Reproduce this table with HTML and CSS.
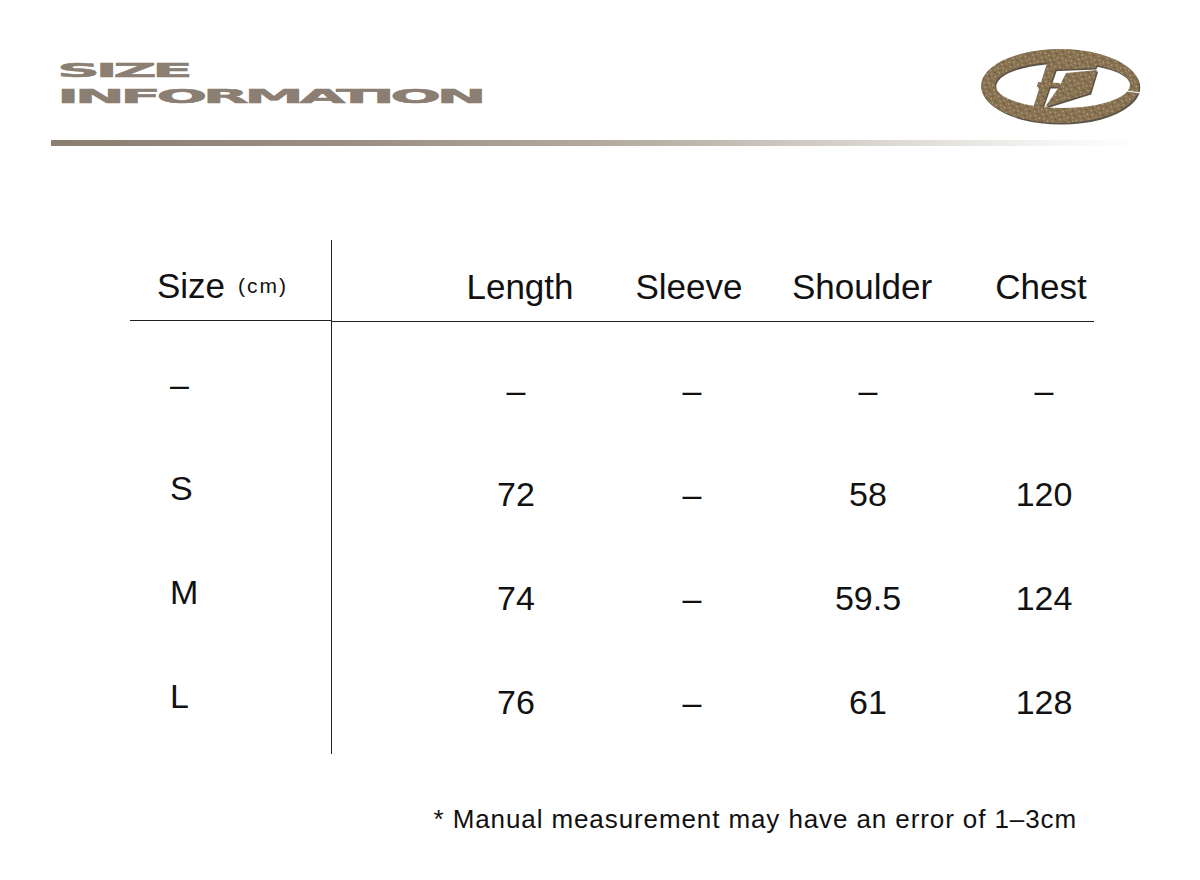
FILE: index.html
```html
<!DOCTYPE html>
<html lang="en">
<head>
<meta charset="utf-8">
<title>Size Information</title>
<link rel="stylesheet" href="styles.css">
</head>
<body>
<div class="page">
  <header class="top">
    <div class="title">
      <span class="title-line">SIZE</span>
      <span class="title-line">INFORMATION</span>
    </div>
    <svg class="logo" width="164" height="80" viewBox="0 0 164 80" aria-label="logo">
      <defs>
        <pattern id="stone" width="9" height="9" patternUnits="userSpaceOnUse" patternTransform="rotate(17)">
          <rect width="9" height="9" fill="#86704f"/>
          <circle cx="1.2" cy="1.5" r="0.8" fill="#c2b499"/>
          <circle cx="5.6" cy="2.4" r="0.6" fill="#5a4832"/>
          <circle cx="3.4" cy="5.1" r="0.9" fill="#b3a283"/>
          <circle cx="7.6" cy="6.3" r="0.7" fill="#c9bda4"/>
          <circle cx="1.9" cy="7.8" r="0.6" fill="#55442f"/>
          <circle cx="6.9" cy="0.4" r="0.5" fill="#a89676"/>
          <circle cx="4.8" cy="8.2" r="0.5" fill="#d0c5ad"/>
          <circle cx="8.4" cy="3.9" r="0.5" fill="#6a573d"/>
          <circle cx="0.3" cy="4.4" r="0.5" fill="#9d8a69"/>
        </pattern>
      </defs>
      <g fill="#33281b" transform="translate(1.2 1.6)" opacity="0.8">
        <path fill-rule="evenodd" d="M82 3 A79 37 0 1 0 82.01 3 Z M84.5 16 A67.5 23 0 1 1 84.49 16 Z"/>
        <polygon points="74,12 120,17 117,22 69,24"/>
        <polygon points="69,17 79,19 61,71 52,72"/>
        <polygon points="60,36 82,37 80,41 59,41"/>
        <polygon points="88,27 119,24 112,47 67,61 81,41"/>
      </g>
      <g fill="url(#stone)">
        <path fill-rule="evenodd" d="M82 3 A79 37 0 1 0 82.01 3 Z M84.5 16 A67.5 23 0 1 1 84.49 16 Z"/>
        <polygon points="74,12 120,17 117,22 69,24"/>
        <polygon points="69,17 79,19 61,71 52,72"/>
        <polygon points="60,36 82,37 80,41 59,41"/>
        <polygon points="88,27 119,24 112,47 67,61 81,41"/>
      </g>
      <line x1="149" y1="45" x2="163" y2="47" stroke="#ffffff" stroke-width="1.2"/>
    </svg>
  </header>
  <div class="rule"></div>

  <div class="table">
    <div class="col-size">
      <div class="head-cell head-size">Size<span class="unit">(cm)</span></div>
      <div class="body">
        <div class="label">–</div>
        <div class="label">S</div>
        <div class="label">M</div>
        <div class="label">L</div>
      </div>
    </div>
    <div class="col-data">
      <div class="head-row">
        <div class="spacer"></div>
        <div class="head-cell hc-length">Length</div>
        <div class="head-cell hc-sleeve">Sleeve</div>
        <div class="head-cell hc-shoulder">Shoulder</div>
        <div class="head-cell hc-chest">Chest</div>
      </div>
      <div class="body">
        <div class="row"><div class="spacer"></div><div class="cell">–</div><div class="cell">–</div><div class="cell">–</div><div class="cell">–</div></div>
        <div class="row"><div class="spacer"></div><div class="cell">72</div><div class="cell">–</div><div class="cell">58</div><div class="cell">120</div></div>
        <div class="row"><div class="spacer"></div><div class="cell">74</div><div class="cell">–</div><div class="cell">59.5</div><div class="cell">124</div></div>
        <div class="row"><div class="spacer"></div><div class="cell">76</div><div class="cell">–</div><div class="cell">61</div><div class="cell">128</div></div>
      </div>
    </div>
  </div>

  <p class="note">* Manual measurement may have an error of 1–3cm</p>
</div>
</body>
</html>
```

FILE: styles.css
```css
html, body {
  margin: 0;
  padding: 0;
  background: #ffffff;
}

.page {
  width: 1200px;
  height: 880px;
  overflow: hidden;
  font-family: "Liberation Sans", Arial, sans-serif;
  color: #111111;
}

.top {
  display: flex;
  justify-content: space-between;
  align-items: flex-start;
  padding: 46px 58px 0 57px;
  height: 80px;
}

.title {
  margin-top: 12px;
  display: flex;
  flex-direction: column;
  align-items: flex-start;
  font-family: "DejaVu Sans", sans-serif;
  font-weight: bold;
  font-size: 19.5px;
  line-height: 26px;
  letter-spacing: -1.5px;
  color: #8b7f73;
  -webkit-text-stroke: 0.5px #8b7f73;
}

.title-line {
  display: inline-block;
  transform: scaleX(3.07);
  transform-origin: left center;
  white-space: nowrap;
}

.logo {
  display: block;
}

.rule {
  margin: 14px 0 0 51px;
  width: 1092px;
  height: 6px;
  background: linear-gradient(to right, #8a7e71 0%, #9c9184 30%, #b9b0a6 55%, #dedad5 78%, #f6f5f3 92%, #ffffff 100%);
}

.table {
  display: flex;
  margin: 94px 0 0 130px;
  width: 964px;
}

.col-size {
  flex: none;
  width: 201px;
  border-right: 1px solid #222222;
}

.col-data {
  flex: 1;
  min-width: 0;
}

.head-cell {
  height: 81px;
  box-sizing: border-box;
  border-bottom: 1px solid #222222;
  display: flex;
  align-items: flex-end;
  padding-bottom: 14px;
  font-size: 35px;
  line-height: 40px;
  white-space: nowrap;
}

.head-size {
  padding-left: 27px;
}

.unit {
  font-size: 21px;
  letter-spacing: 2px;
  margin-left: 13px;
}

.head-row {
  display: grid;
  grid-template-columns: 96px 176px 176px 176px 176px;
  height: 81px;
  border-bottom: 1px solid #222222;
}

.head-row .head-cell {
  border-bottom: none;
  justify-content: center;
}

.hc-length { padding-left: 8px; }
.hc-sleeve { padding-right: 6px; }
.hc-shoulder { padding-right: 12px; }
.hc-chest { padding-right: 6px; }

.body {
  padding-top: 16px;
}

.label {
  height: 104px;
  box-sizing: border-box;
  padding: 0 0 10px 40px;
  font-size: 34px;
  line-height: 94px;
}

.row {
  display: grid;
  grid-template-columns: 96px 176px 176px 176px 176px;
  height: 104px;
}

.cell {
  text-align: center;
  font-size: 34px;
  line-height: 104px;
  white-space: nowrap;
}

.note {
  margin: 50px 123px 0 0;
  text-align: right;
  font-size: 26px;
  line-height: 30px;
  letter-spacing: 0.9px;
  color: #111111;
}
```
